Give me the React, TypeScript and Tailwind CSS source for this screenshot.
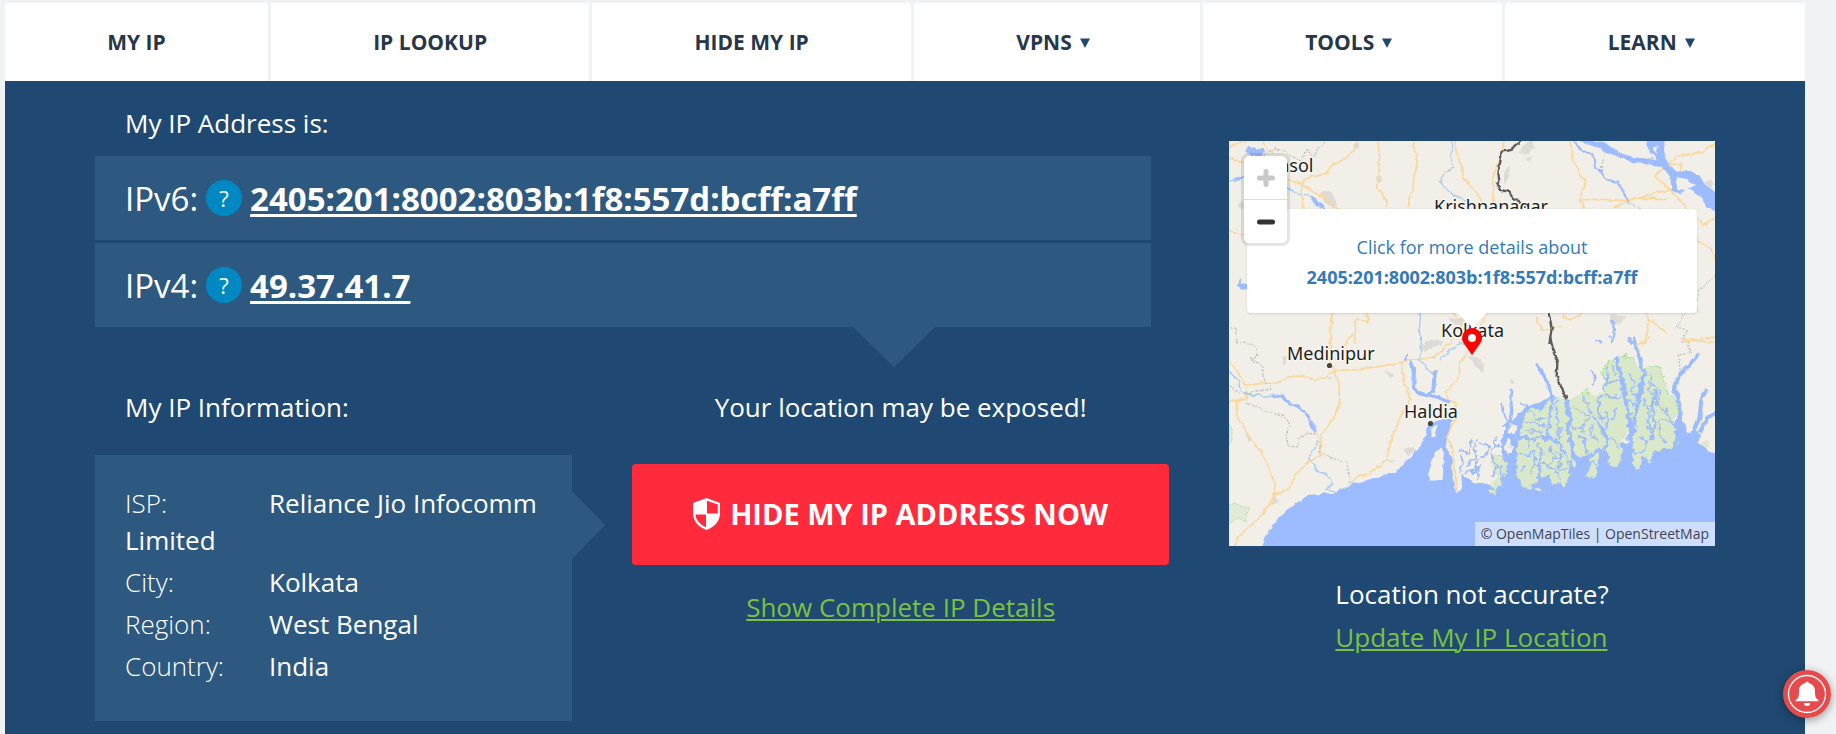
import React from "react";

const navItems = [
  { label: "MY IP", menu: false },
  { label: "IP LOOKUP", menu: false },
  { label: "HIDE MY IP", menu: false },
  { label: "VPNS", menu: true },
  { label: "TOOLS", menu: true },
  { label: "LEARN", menu: true },
];

const addresses = [
  { version: "IPv6:", value: "2405:201:8002:803b:1f8:557d:bcff:a7ff" },
  { version: "IPv4:", value: "49.37.41.7" },
];

const details = [
  { label: "ISP:", value: "Reliance Jio Infocomm Limited" },
  { label: "City:", value: "Kolkata" },
  { label: "Region:", value: "West Bengal" },
  { label: "Country:", value: "India" },
];

function NavBar() {
  return (
    <nav className="flex gap-[3px]">
      {navItems.map((item) => (
        <a
          key={item.label}
          href="#"
          className="flex h-[78px] flex-auto items-center justify-center gap-2 bg-white pt-[2px] text-[21px] font-bold text-[#27374a]"
        >
          {item.label}
          {item.menu && (
            <svg viewBox="0 0 10 10" className="mr-2 size-[10px]" aria-hidden="true">
              <path d="M0 0.5h10L5 10z" fill="#1f4972" />
            </svg>
          )}
        </a>
      ))}
    </nav>
  );
}

function ShieldIcon() {
  return (
    <svg viewBox="0 0 27 32" className="h-8 w-[27px] shrink-0" aria-hidden="true">
      <path
        fillRule="evenodd"
        fill="#fff"
        d="M13.500 0 27 5v10.500c0 7.500-5.500 13.500-13.500 16.500C5.500 29 0 23 0 15.500V5zM14 2.800v12.800h10.800V6.600zM13 29.200V16.400H2.400c.6 5.400 4.600 10.100 10.600 12.800z"
      />
    </svg>
  );
}

function MapDrawing() {
  return (
    <svg viewBox="0 0 486 405" className="block h-full w-full" preserveAspectRatio="xMidYMid slice" role="img" aria-label="Map of Kolkata">
      <defs>
        <filter id="rough" x="-10" y="-10" width="506" height="425" filterUnits="userSpaceOnUse" colorInterpolationFilters="sRGB">
          <feTurbulence type="fractalNoise" baseFrequency="0.13" numOctaves="2" seed="4" result="n" />
          <feDisplacementMap in="SourceGraphic" in2="n" scale="5" xChannelSelector="R" yChannelSelector="G" />
        </filter>
        <filter id="delta" x="-10" y="-10" width="506" height="425" filterUnits="userSpaceOnUse" colorInterpolationFilters="sRGB">
          <feTurbulence type="fractalNoise" baseFrequency="0.16" numOctaves="3" seed="9" result="n" />
          <feDisplacementMap in="SourceGraphic" in2="n" scale="9" xChannelSelector="R" yChannelSelector="G" />
        </filter>
      </defs>
      <rect width="486" height="405" fill="#f1efe8" />

      {/* Built-up areas and woodland */}
      <g fill="#dddbd8" filter="url(#rough)">
        <path d="M91 51l12 0 5 12-3 4-10-6zM147 38a3 4 0 1 0 6 0 3 4 0 1 0-6 0zM8 65a3 3 0 1 0 7 0 3 3 0 1 0-7 0zM125 3h5v5h-4zM293 5l10-6 4 8-10 7-6-3zM297 18l6-3-2 6zM275 32l5-8 1 10-6 9zM473 42l10-3v7l-7 3zM382 173l14 3-6 9-8-2zM220 175l5 4 10-3v8l-14-1zM53 215l4 2v8l-4-3zM155 228l10 6-5 2zM97 237h8l-4 2zM175 308l8-3 5 5-8 4zM158 318l10 0-8 3zM18 292l5 6-5 4zM43 355l9 6-9 3zM192 206l10-8 12 1-1 5-18 6zM240 215l12 2 3 13-4 1-7-9zM281 237l4 4-3 2zM218 305l4 0-1 3z" />
      </g>
      <g fill="#e1ead8" stroke="#9fe09a" strokeWidth="1" strokeDasharray="1.5 1.5">
        <path d="M0 364l6-2 5 3 10 2-4 7 0 7-8-4-9 6zM0 283l3 4 0 12-3 5z" />
      </g>

      {/* Sea and coastline */}
      <g filter="url(#rough)">
        <g transform="translate(-9 199) scale(.33333)">
          <path
            fill="#9dbcff"
            d="M110 640 126 612 140 585 165 545 200 510 230 488 265 465 340 458 370 448 400 430 450 418 490 405 530 395 555 365 580 345 600 318 615 290 625 250 660 238 700 235 690 265 680 300 677 325 695 350 698 400 708 455 725 452 728 400 738 410 760 432 790 425 815 440 830 440 845 380 850 330 858 300 850 285 868 250 885 235 910 205 950 190 990 172 1045 175 1100 300 1330 320 1368 240 1375 180 1385 230 1400 278 1412 278 1428 268 1440 285 1436 308 1455 322 1470 335 1530 352 1530 650z"
          />
          <path fill="#f1efe8" d="M660 320 672 350 668 420 632 422 624 405 640 350zM630 292 636 262 655 252 642 290z" />
          <path fill="#d9e8c9" d="M1442 310 1465 300 1468 325 1455 320z" />
        </g>
      </g>

      {/* Roads */}
      <g fill="none" stroke="#fbd79c" strokeWidth="5" strokeLinejoin="round" filter="url(#rough)">
        <g transform="translate(-9 -11) scale(.33333)">
          <path d="M20 58 46 42 75 36M125 30 140 60 165 64M20 88 75 95M412 30 402 60 375 85 340 105 318 130 285 135 250 150 243 185 250 215 254 250M200 148 240 160 270 180 300 195 340 225 370 245M475 25 477 80 478 140 470 165 498 210 500 245M583 25 582 60 590 75 585 120 578 180 567 205 565 245M703 25 715 80 730 140 760 175 785 215 800 245M20 300 50 312 80 315M333 545 331 640M438 545 446 575 405 570 403 640M700 545 730 600" />
          <path d="M855 30 845 80 820 130 822 220 835 240M1050 30 1058 90 1095 155 1080 210 1140 208 1230 212 1300 190 1350 180 1400 235 1450 285 1490 265M1080 210 1095 240M1180 232 1250 205 1340 205M1340 100 1305 140 1350 180 1375 150 1385 100 1340 105 1370 80 1440 68 1495 40M1425 330 1470 350 1490 390M1040 545 1030 560 1050 570 1090 550M950 560 965 600 1025 590M1280 545 1285 570 1340 610M1285 570 1275 640M1390 635 1490 620M805 545 785 580 760 600" />
        </g>
        <g transform="translate(-9 199) scale(.33333)">
          <path d="M20 55 50 90 75 135 130 130 180 125 220 108 265 110 285 123 310 110 345 93 400 88 480 80 545 66 640 52 690 10 705 -15M331 -20 332 80 345 95 357 130 358 190 340 235 305 285 300 350 260 370 230 400 210 440 185 458 162 462 150 490 120 530 90 560 55 590 45 625M20 187 75 178 78 140M50 182 50 225 90 290 130 345 165 430 165 460M545 66 550 110 570 180 540 240 515 290 500 360 450 400 415 410 395 430M745 35 720 60 718 110 680 155 685 180 708 190 705 240 680 290 700 330 705 400 712 452M400 -20 345 60M1290 -10 1255 20 1258 50M1390 0 1490 8" />
        </g>
      </g>

      {/* Administrative boundaries */}
      <g fill="none" stroke="#bdbcba" strokeWidth="4" strokeDasharray="5 5" filter="url(#rough)">
        <g transform="translate(-9 -11) scale(.33333)">
          <path d="M130 75 165 55 200 68 215 80 245 90 260 60 285 80 300 50 318 35M20 590 45 592 52 640M1160 50 1145 110 1143 125M1185 82 1230 88 1310 85M1490 430 1440 480 1425 520 1435 550M1395 545 1370 590 1400 600 1385 640M1225 215 1270 240" />
        </g>
        <g transform="translate(-9 199) scale(.33333)">
          <path d="M50 5 100 10 115 45 90 55 125 75 130 120 150 130 148 150 110 150 80 165 80 195 110 195 130 215 190 225 208 255 195 300 208 320 235 320 240 295 270 275 295 290 300 335 350 360 380 365 390 430M20 135 60 160 110 165M1405 5 1410 40 1375 45 1380 85 1370 120 1360 160" />
        </g>
      </g>
      <g fill="none" stroke="#5d5c5c" strokeWidth="7" strokeLinejoin="round" filter="url(#rough)">
        <path transform="translate(-9 -11) scale(.33333)" d="M915 20 890 45 870 60 845 65 840 100 835 130 838 155 832 160 842 180 865 185 880 205 910 225 925 245M985 545 990 570 995 595 988 640" />
        <path transform="translate(-9 199) scale(.33333)" d="M990 -10 1000 30 1012 70 1010 110 1020 130 1028 155 1044 176" />
      </g>

      {/* Rivers and lakes */}
      <g filter="url(#rough)" fill="none" stroke="#9dbcff" strokeLinejoin="round">
        <g transform="translate(-9 -11) scale(.33333)">
          <path fill="#9dbcff" stroke="none" d="M75 60 85 47 97 55 107 47 113 58 130 56 133 65 125 72 130 82 110 78 98 80 84 72zM262 195 290 203 320 240 300 236 275 212zM50 465 62 448 68 462 85 458 85 482 62 478z" />
          <path strokeWidth="8" d="M40 150 75 138" />
          <path strokeWidth="4" stroke="#a9cdf0" d="M200 170 230 190 262 195M20 155 50 148M690 30 700 60 688 80 702 110 680 125 660 155 675 175 700 195 730 205 770 245M602 545 598 600 603 640" />
          <path fill="#9dbcff" stroke="none" d="M1075 30 1110 30 1160 42 1195 65 1240 82 1310 90 1280 50 1280 25 1333 25 1334 75 1345 105 1372 125 1410 122 1438 135 1455 165 1510 200 1510 250 1460 235 1440 200 1400 175 1385 190 1355 185 1350 140 1325 108 1270 102 1220 92 1180 75 1140 55 1100 42z" />
          <path fill="#f1efe8" stroke="none" d="M1370 140 1375 178 1395 180 1425 165 1400 148zM1300 50 1310 75 1314 50z" />
          <path strokeWidth="6" d="M1060 35 1085 60 1120 75 1125 110 1145 125 1160 150 1195 155 1205 180 1220 200 1225 225M1178 570 1182 600 1175 640M1220 625 1240 640M1130 630 1150 640" />
        </g>
        <g transform="translate(-9 199) scale(.33333)">
          <path strokeWidth="12" d="M568 68 582 85 580 140 605 163 650 172 690 185M625 165 640 150 645 90" />
          <path strokeWidth="8" d="M155 168 185 165 200 185 235 200 265 230 287 278M555 62 563 45" />
          <path strokeWidth="4" stroke="#a9cdf0" d="M20 90 55 120 60 150 100 170 115 160 130 172 155 168M290 300 285 325 265 355 285 375 290 395 325 405 335 430 320 448 350 455M640 105 600 60 605 -10M660 60 690 30 720 5 750 15" />
          <path strokeWidth="10" d="M950 70 965 95 985 130 995 175M875 150 872 180 875 210 870 250M1240 -10 1250 30 1260 60 1268 95" />
          <path strokeWidth="12" d="M1435 40 1410 75 1375 105 1362 145 1376 180 1380 240M1460 145 1445 180 1438 235 1422 270M1500 210 1460 235 1440 278" />
          <path strokeWidth="5" d="M900 190 925 200 895 225 910 250M845 190 855 230 870 250M1115 90 1125 115 1120 135M1165 -10 1180 5" />
        </g>
      </g>

      {/* Mangrove delta */}
      <g filter="url(#delta)">
        <g transform="translate(241 199) scale(.33333)" strokeLinejoin="round">
          <path
            fill="#d9e8c9"
            d="M165 225 185 205 215 215 232 185 265 172 290 185 300 215 295 250 292 290 302 340 322 375 315 388 292 350 300 410 290 432 250 432 240 400 218 412 205 370 198 425 178 447 152 445 140 400 145 310 155 260zM300 185 330 165 350 148 362 165 388 165 402 130 400 90 420 60 437 68 450 58 465 45 490 55 500 75 520 95 545 80 575 85 582 115 595 160 620 180 625 220 612 240 622 300 605 327 550 332 548 365 515 352 508 387 490 380 487 340 490 280 470 270 468 300 452 300 455 350 440 382 420 378 412 342 385 320 382 400 365 414 350 410 362 375 345 345 330 350 310 340 300 290 305 240zM65 340 88 350 108 370 102 400 92 440 72 452 65 430 82 410 66 390zM195 440 212 440 222 455 202 455zM54 445l14 2 4 12-14 2z"
          />
          <path fill="#f1efe8" d="M-30 310 0 300 50 300 100 290 125 300 118 345 100 350 70 330 50 340 48 390 40 425 15 432 5 400-20 400zM115 250l30 10-10 25-22-5zM370 140l25 0 5 20-30 0z" />
          <path
            fill="none"
            stroke="#7fdc7d"
            strokeWidth="5"
            strokeDasharray="3 5"
            d="M300 185 330 165 350 148 362 165M402 130 400 90 420 60 437 68M450 58 465 45 490 55 500 75M520 95 545 80 575 85 582 115 595 160 620 180 625 220"
          />
          <g fill="none" stroke="#9dbcff">
            <path strokeWidth="13" d="M440 55 455 120 468 190 480 250 482 310M522 90 512 150 500 210 488 270 480 320M288 180 297 230 300 300 312 350 340 390" />
            <path strokeWidth="9" d="M248 165 242 220 238 260 232 290 270 310 290 350M150 290 190 300 215 290 240 300M372 230 392 260 412 300 402 330M320 290 345 300 350 340M555 150 548 200 555 250 545 300M392 170 382 215 400 240M340 360 385 330" />
            <path
              strokeWidth="5"
              d="M155 250 185 245 220 260 235 250M165 275 220 275M180 215 200 235 230 235M262 180 258 230 270 260 265 300M150 340 175 345 190 330 195 360 185 400M170 380 150 390M205 310 215 340 205 375 225 370 240 390M240 320 250 350 240 380 262 400 270 430M262 330 275 360 262 385 290 390M250 355 280 350M180 300 175 330M310 200 340 220 365 230 330 260 345 280M340 170 352 200 365 225M305 260 330 265M365 250 360 290 385 300M400 110 420 130 445 120M410 80 412 120 400 160 425 175 450 170M400 210 415 240 405 280M430 80 430 105M480 100 492 130 485 165 505 170M470 180 495 190M540 100 545 130 535 150 555 165 545 190M545 130 570 150 560 190 590 210 600 250M520 180 540 215 530 260 545 280M560 240 600 240 615 260M570 250 570 290 590 310M505 290 530 300 520 330M490 340 530 330M420 295 445 320M350 370 380 370M440 200 430 240"
            />
            <path strokeWidth="6" d="M-30 330-5 340 5 300M20 300 15 350-10 380M30 310 60 320 45 345 20 360 25 420M0 400 30 380M75 290 80 320 60 345 85 375 65 405M100 300 100 340 85 350M95 375 90 410M-20 350-30 400M-20 400 10 390" />
            <path strokeWidth="14" d="M118 240 108 280 95 320 110 350" />
          </g>
        </g>
      </g>

      {/* Place names */}
      <g fontFamily="'Noto Sans', sans-serif" fontSize="18" fill="#1f1f1f" stroke="#f6f5f0" strokeWidth="3" paintOrder="stroke" strokeLinejoin="round">
        <text x="19" y="31">Asansol</text>
        <text x="205" y="72">Krishnanagar</text>
        <text x="212" y="196">Kolkata</text>
        <text x="58" y="219">Medinipur</text>
        <text x="175" y="277">Haldia</text>
      </g>
      <g fill="#444">
        <circle cx="100.500" cy="224.500" r="2.600" />
        <circle cx="201.500" cy="282.500" r="2.600" />
      </g>
    </svg>
  );
}

function LocationMap() {
  return (
    <div className="relative aspect-[6/5] w-full overflow-hidden">
      <MapDrawing />
      <div className="absolute inset-x-[18px] top-[68px] flex h-[104px] flex-col items-center justify-center rounded bg-white pt-[2px] shadow-sm">
        <a href="#" className="text-center text-lg leading-[30px] text-[#337ab7]">
          Click for more details about
          <br />
          <strong className="font-bold">2405:201:8002:803b:1f8:557d:bcff:a7ff</strong>
        </a>
        <svg viewBox="0 0 30 14" className="absolute top-full h-[14px] w-[30px]" aria-hidden="true">
          <path d="M0 0h30L15 14z" fill="#fff" />
        </svg>
      </div>
      <svg viewBox="0 0 20 27" className="absolute top-[187px] left-1/2 h-[27px] w-5 -translate-x-1/2" aria-hidden="true">
        <path d="M10 27L2.600 16.500C1 14.300 0 12.300 0 10A10 10 0 0 1 20 10C20 12.300 19 14.300 17.400 16.500z" fill="#f00" />
        <circle cx="10" cy="10" r="4" fill="#fff" />
      </svg>
      <div className="absolute top-3 left-3 flex flex-col rounded-lg border-[3px] border-black/10 bg-clip-padding">
        <button type="button" aria-label="Zoom in" className="flex h-11 w-[43px] items-center justify-center rounded-t-md border-b border-[#ddd] bg-white">
          <svg viewBox="0 0 18 18" className="size-[18px]" aria-hidden="true">
            <path d="M9 2.500v13M2.500 9h13" stroke="#c8c8c8" strokeWidth="5" strokeLinecap="round" />
          </svg>
        </button>
        <button type="button" aria-label="Zoom out" className="flex h-[43px] w-[43px] items-center justify-center rounded-b-md bg-white">
          <svg viewBox="0 0 18 18" className="size-[18px]" aria-hidden="true">
            <path d="M2.500 9h13" stroke="#333" strokeWidth="5" strokeLinecap="round" />
          </svg>
        </button>
      </div>
      <div className="absolute right-0 bottom-0 bg-white/50 px-[6px] text-sm leading-6 text-[#404550]">
        © <a href="#">OpenMapTiles</a> | <a href="#">OpenStreetMap</a>
      </div>
    </div>
  );
}

function AddressPanel() {
  return (
    <section>
      <h2 className="mb-[14px] pl-[30px]">My IP Address is:</h2>
      <div className="relative mr-[18px] flex flex-col gap-[3px]">
        {addresses.map((address) => (
          <div key={address.version} className="flex h-[84px] items-center bg-[#2d5980] pl-[30px] text-[33px]">
            <span>{address.version}</span>
            <button
              type="button"
              aria-label={"About " + address.version}
              className="mx-2 flex size-9 items-center justify-center rounded-full bg-[#0088c2] text-[22px]"
            >
              ?
            </button>
            <a href="#" className="font-bold underline decoration-[3px] underline-offset-[3px]">
              {address.value}
            </a>
          </div>
        ))}
        <svg viewBox="0 0 82 40" className="absolute top-full right-[216px] h-10 w-[82px]" aria-hidden="true">
          <path d="M0 0h82L41 40z" fill="#2d5980" />
        </svg>
      </div>
    </section>
  );
}

function InformationPanel() {
  return (
    <section>
      <h2 className="mb-[29px] pl-[30px] font-medium">My IP Information:</h2>
      <div className="relative bg-[#2d5980] px-[30px] pt-[30px] pb-[31px]">
        <ul>
          {details.map((detail) => (
            <li key={detail.label} className="mb-[5px]">
              <span className="inline-block w-36 font-light">{detail.label}</span>
              <span className="font-medium">{detail.value}</span>
            </li>
          ))}
        </ul>
        <svg viewBox="0 0 33 68" className="absolute top-9 left-full h-[68px] w-[33px]" aria-hidden="true">
          <path d="M0 0v68L33 34z" fill="#2d5980" />
        </svg>
      </div>
    </section>
  );
}

function ExposedPanel() {
  return (
    <section className="flex flex-col items-center">
      <h2>Your location may be exposed!</h2>
      <button
        type="button"
        className="mt-[38px] flex h-[101px] w-full items-center justify-center gap-[10px] rounded bg-[#ff2a3b] pb-[2px] text-[29px] font-bold"
      >
        <ShieldIcon />
        HIDE MY IP ADDRESS NOW
      </button>
      <a href="#" className="mt-6 text-[#7ac142] underline decoration-2 underline-offset-2">
        Show Complete IP Details
      </a>
    </section>
  );
}

function NotificationBell() {
  return (
    <button type="button" aria-label="Notifications" className="fixed right-[5px] bottom-4 size-12 rounded-full shadow-[0_2px_8px_rgba(0,0,0,0.4)]">
      <svg viewBox="0 0 48 48" className="size-12" aria-hidden="true">
        <circle cx="24" cy="24" r="24" fill="#e54b4d" />
        <circle cx="24" cy="24" r="18.500" fill="none" stroke="#fff" strokeWidth="1.300" />
        <path
          fill="#fff"
          d="M24 11.800c1.200 0 1.700.6 1.900 1.400 4 .9 6.100 3.700 6.100 7.800 0 6 .8 7.400 3.200 8.900.5.400.5 1.400-.4 1.400H13.200c-.9 0-.9-1-.4-1.400C15.200 28.400 16 27 16 21c0-4.100 2.100-6.900 6.100-7.800.2-.8.700-1.400 1.900-1.400zM20.800 33h6.400a3.200 3 0 0 1-6.400 0z"
        />
      </svg>
    </button>
  );
}

export default function App() {
  return (
    <div className="flex min-h-screen flex-col bg-[#f1f2f4] pt-[3px] pr-[31px] pl-[5px] font-['Open_Sans',sans-serif]">
      <NavBar />
      <main className="flex flex-1 justify-between gap-[60px] bg-[#1f4972] px-[5%] pb-[13px] text-[26px] leading-[37px] text-white">
        <div className="flex flex-1 flex-col gap-[62px] pt-6">
          <AddressPanel />
          <div className="grid grid-cols-[8fr_9fr] gap-[60px]">
            <InformationPanel />
            <ExposedPanel />
          </div>
        </div>
        <aside className="flex w-[30%] shrink-0 flex-col items-center pt-[60px]">
          <LocationMap />
          <div className="mt-[30px] flex flex-col gap-[6px]">
            <p>Location not accurate?</p>
            <a href="#" className="text-[#7ac142] underline decoration-2 underline-offset-2">
              Update My IP Location
            </a>
          </div>
        </aside>
      </main>
      <NotificationBell />
    </div>
  );
}
